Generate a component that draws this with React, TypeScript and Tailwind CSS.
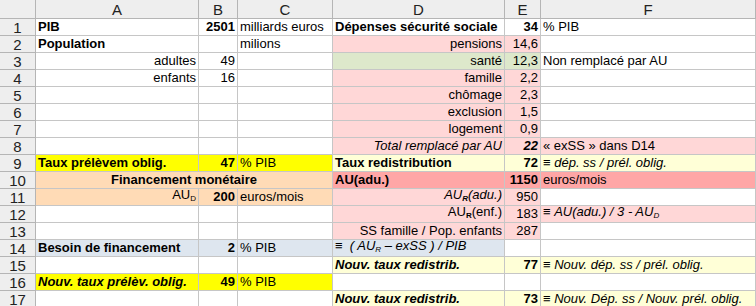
type Cell = {
  t?: React.ReactNode;
  r?: boolean;
  c?: boolean;
  b?: boolean;
  i?: boolean;
  bg?: string;
  span?: string;
};

const PINK = 'bg-[#ffd7d7]';
const GREEN = 'bg-[#dde8cb]';
const YEL = 'bg-[#ffff00]';
const LYEL = 'bg-[#ffffd7]';
const PEACH = 'bg-[#ffdbb6]';
const SALMON = 'bg-[#ffa6a6]';
const BLUE = 'bg-[#dee6ef]';

const Sub = ({ children, b }: { children: React.ReactNode; b?: boolean }) => (
  <span className={`text-[8px] relative top-[2px] ${b ? 'font-bold' : ''}`}>{children}</span>
);

const rows: Cell[][] = [
  [{ t: 'PIB', b: true }, { t: '2501', r: true, b: true }, { t: 'milliards euros' }, { t: 'Dépenses sécurité sociale', b: true }, { t: '34', r: true, b: true }, { t: '% PIB' }],
  [{ t: 'Population', b: true }, {}, { t: 'milions' }, { t: 'pensions', r: true, bg: PINK }, { t: '14,6', r: true, bg: PINK }, {}],
  [{ t: 'adultes', r: true }, { t: '49', r: true }, {}, { t: 'santé', r: true, bg: GREEN }, { t: '12,3', r: true, bg: GREEN }, { t: 'Non remplacé par AU' }],
  [{ t: 'enfants', r: true }, { t: '16', r: true }, {}, { t: 'famille', r: true, bg: PINK }, { t: '2,2', r: true, bg: PINK }, {}],
  [{}, {}, {}, { t: 'chômage', r: true, bg: PINK }, { t: '2,3', r: true, bg: PINK }, {}],
  [{}, {}, {}, { t: 'exclusion', r: true, bg: PINK }, { t: '1,5', r: true, bg: PINK }, {}],
  [{}, {}, {}, { t: 'logement', r: true, bg: PINK }, { t: '0,9', r: true, bg: PINK }, {}],
  [{}, {}, {}, { t: 'Total remplacé par AU', r: true, i: true, bg: PINK }, { t: '22', r: true, b: true, i: true, bg: PINK }, { t: '« exSS » dans D14', bg: PINK }],
  [{ t: 'Taux prélèvem oblig.', b: true, bg: YEL }, { t: '47', r: true, b: true, bg: YEL }, { t: '% PIB', bg: YEL }, { t: 'Taux redistribution', b: true, bg: LYEL }, { t: '72', r: true, b: true, bg: LYEL }, { t: <>≡ <i>dép. ss / prél. oblig.</i></>, bg: LYEL }],
  [{ t: 'Financement monétaire', c: true, b: true, bg: PEACH, span: 'col-span-3' }, { t: 'AU(adu.)', b: true, bg: SALMON }, { t: '1150', r: true, b: true, bg: SALMON }, { t: 'euros/mois', bg: SALMON }],
  [{ t: <>AU<Sub>D</Sub></>, r: true, bg: PEACH }, { t: '200', r: true, b: true, bg: PEACH }, { t: 'euros/mois', bg: PEACH }, { t: <>AU<Sub b>R</Sub>(adu.)</>, r: true, i: true, bg: PINK }, { t: '950', r: true, bg: PINK }, {}],
  [{}, {}, {}, { t: <>AU<Sub b>R</Sub>(enf.)</>, r: true, bg: PINK }, { t: '183', r: true, bg: PINK }, { t: <>≡ <i>AU(adu.) / 3 - AU<Sub>D</Sub></i></>, bg: PINK }],
  [{}, {}, {}, { t: 'SS famille / Pop. enfants', r: true, bg: PINK }, { t: '287', r: true, bg: PINK }, {}],
  [{ t: 'Besoin de financement', b: true, bg: BLUE }, { t: '2', r: true, b: true, bg: BLUE }, { t: '% PIB', bg: BLUE }, { t: <>≡&nbsp;&nbsp;<i>( AU<Sub>R</Sub> – exSS ) / PIB</i></>, bg: BLUE }, {}, {}],
  [{}, {}, {}, { t: 'Nouv. taux redistrib.', b: true, i: true, bg: LYEL }, { t: '77', r: true, b: true, bg: LYEL }, { t: <>≡ <i>Nouv. dép. ss / prél. oblig.</i></>, bg: LYEL }],
  [{ t: 'Nouv. taux prélèv. oblig.', b: true, i: true, bg: YEL }, { t: '49', r: true, b: true, bg: YEL }, { t: '% PIB', bg: YEL }, {}, {}, {}],
  [{}, {}, {}, { t: 'Nouv. taux redistrib.', b: true, i: true, bg: LYEL }, { t: '73', r: true, b: true, bg: LYEL }, { t: <>≡ <i>Nouv. Dép. ss / Nouv. prél. oblig.</i></>, bg: LYEL }],
];

const cols = ['A', 'B', 'C', 'D', 'E', 'F'];

export default function App() {
  return (
    <div
      className="w-[756px] h-[306px] overflow-hidden bg-white text-black"
      style={{ fontFamily: '"Liberation Sans", Arial, sans-serif' }}
    >
      <div className="grid grid-cols-[36px_163px_39px_95px_172px_36px_215px] auto-rows-[17px] grid-rows-[19px]">
        <div className="bg-[#eeeeee] border-r border-b border-[#b5b5b5]" />
        {cols.map((c) => (
          <div
            key={c}
            className="bg-[#eeeeee] border-r border-b border-[#b5b5b5] flex items-center justify-center text-[15px] leading-none text-[#222]"
          >
            {c}
          </div>
        ))}
        {rows.map((row, ri) => (
          <Row key={ri} n={ri + 1} row={row} />
        ))}
      </div>
    </div>
  );
}

function Row({ n, row }: { n: number; row: Cell[] }) {
  return (
    <>
      <div className="bg-[#eeeeee] border-r border-b border-[#b5b5b5] flex items-end justify-center text-[15px] leading-none text-[#222]">
        {n}
      </div>
      {row.map((cell, ci) => (
        <div
          key={ci}
          className={`${cell.span ?? ''} ${cell.bg ?? 'bg-white'} border-r border-b border-[#c6c6c6] flex items-end px-[2px] pb-[1px] text-[13px] leading-[15px] whitespace-nowrap overflow-visible ${
            cell.r ? 'justify-end' : cell.c ? 'justify-center' : 'justify-start'
          } ${cell.b ? 'font-bold' : ''} ${cell.i ? 'italic' : ''}`}
        >
          <span>{cell.t}</span>
        </div>
      ))}
    </>
  );
}
